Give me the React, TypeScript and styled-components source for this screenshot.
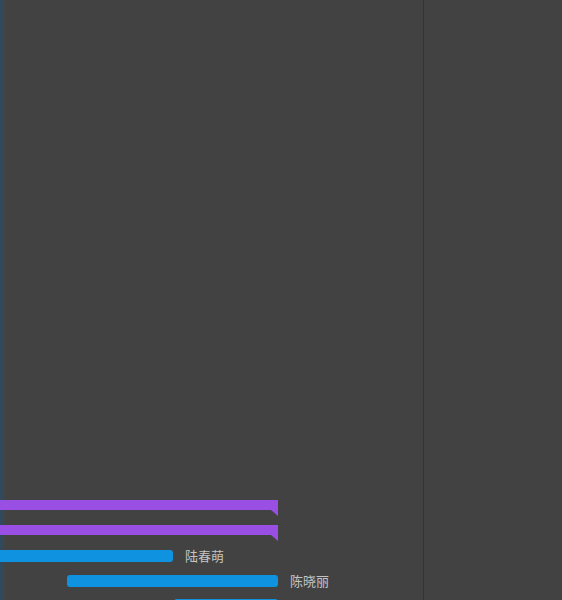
import React from "react";
import styled, { createGlobalStyle } from "styled-components";

const Global = createGlobalStyle`
  html, body { margin: 0; padding: 0; background: #424242; overflow: hidden; }
  body { font-family: "Liberation Sans", "Noto Sans CJK SC", sans-serif; }
`;

const Frame = styled.div`
  display: flex;
  width: 562px;
  height: 600px;
  background: #424242;
  overflow: hidden;
`;

const Chart = styled.div`
  position: relative;
  width: 424px;
  height: 600px;
  border-right: 1px solid #353535;
  display: flex;
  flex-direction: column;
  padding-top: 500px;
  box-sizing: border-box;
  overflow: hidden;
  background: linear-gradient(to right, #2d4a60 0px, #34485a 2px, #3f4548 4px, #424242 6px);
`;

const Side = styled.div`
  flex: 1;
  background: #424242;
`;

const Row = styled.div<{ $h?: number }>`
  height: ${(p) => p.$h ?? 25}px;
  flex: 0 0 ${(p) => p.$h ?? 25}px;
  display: flex;
  align-items: flex-start;
`;

const Summary = styled.div<{ $start: number; $end: number }>`
  position: relative;
  margin-left: ${(p) => p.$start}px;
  width: ${(p) => p.$end - p.$start}px;
  flex: 0 0 auto;
  height: 10px;
  background: #9a4fe4;
  &::after {
    content: "";
    position: absolute;
    right: 0;
    top: 10px;
    width: 0;
    height: 0;
    border-top: 6px solid #9a4fe4;
    border-left: 7px solid transparent;
  }
`;

const Task = styled.div<{ $start: number; $end: number }>`
  margin-left: ${(p) => p.$start}px;
  width: ${(p) => p.$end - p.$start}px;
  height: 12px;
  background: #0f92e0;
  border-radius: 3px;
  flex: 0 0 auto;
`;

const Label = styled.span`
  margin-left: 12px;
  font-size: 13px;
  line-height: 14px;
  color: #c4c4c4;
  white-space: nowrap;
`;

export default function App() {
  return (
    <>
      <Global />
      <Frame>
        <Chart>
          <Row>
            <Summary $start={-4} $end={278} />
          </Row>
          <Row>
            <Summary $start={-4} $end={278} />
          </Row>
          <Row>
            <Task $start={-4} $end={173} />
            <Label>陆春萌</Label>
          </Row>
          <Row $h={24}>
            <Task $start={67} $end={278} />
            <Label>陈晓丽</Label>
          </Row>
          <Row>
            <Task $start={174} $end={278} />
          </Row>
        </Chart>
        <Side />
      </Frame>
    </>
  );
}
